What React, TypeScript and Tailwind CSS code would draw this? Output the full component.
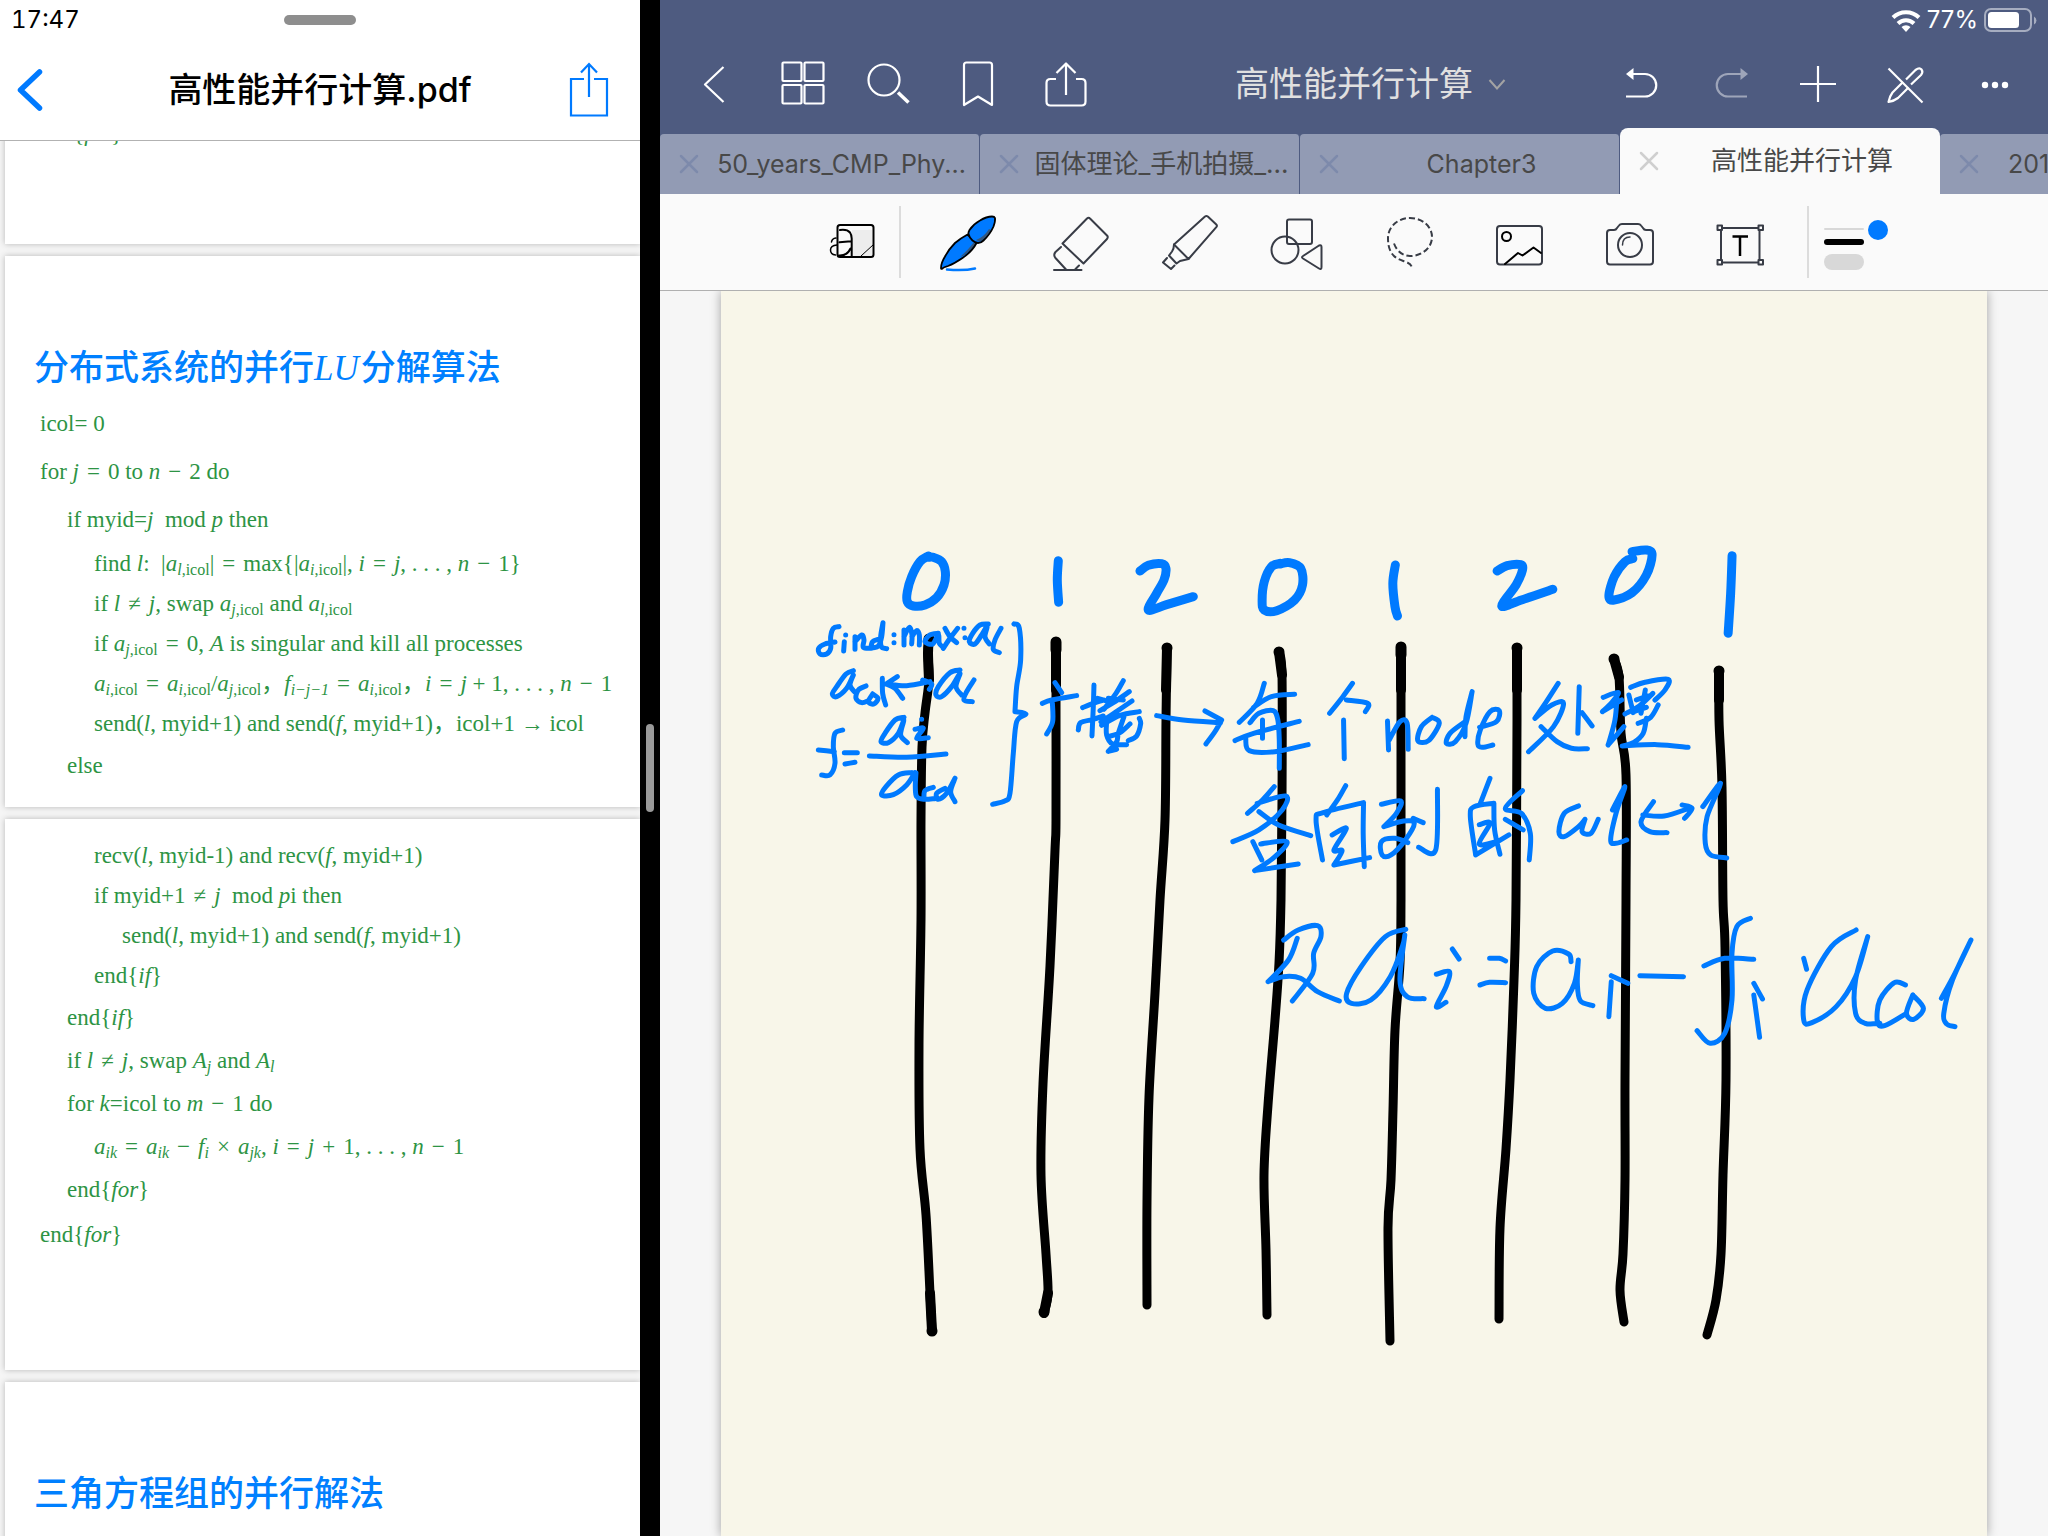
import type { ReactNode } from "react";

const SANS = "font-['Inter','Noto_Sans_CJK_SC',sans-serif]";

/* ---------- Left: document viewer ---------- */

function V({ children, sub }: { children: ReactNode; sub?: ReactNode }) {
  return (
    <>
      <i>{children}</i>
      {sub !== undefined && <sub className="text-base">{sub}</sub>}
    </>
  );
}

function Op({ children }: { children: ReactNode }) {
  return <span className="mx-2">{children}</span>;
}

function PdfPage({ children, className = "" }: { children?: ReactNode; className?: string }) {
  return (
    <section className={`h-[551px] shrink-0 bg-white shadow-[0_0_6px_rgba(0,0,0,0.25)] ${className}`}>
      {children}
    </section>
  );
}

const LEVEL = ["pl-[35px]", "pl-[62px]", "pl-[89px]", "pl-[117px]"];
const LEADING = { wide: "leading-[48px]", mid: "leading-[43px]", tight: "leading-[40px]" };

function Line({
  level,
  gap = "tight",
  children,
}: {
  level: number;
  gap?: keyof typeof LEADING;
  children: ReactNode;
}) {
  return <p className={`whitespace-nowrap ${LEVEL[level]} ${LEADING[gap]}`}>{children}</p>;
}

function PageTitle({ children }: { children: ReactNode }) {
  return (
    <h2 className="whitespace-nowrap pl-[29px] font-['Liberation_Serif','Noto_Sans_CJK_SC',serif] text-[35px] font-medium leading-[62px] text-[#0080ff]">
      {children}
    </h2>
  );
}

function DocumentPane() {
  return (
    <div className="flex w-[640px] shrink-0 flex-col bg-[#f5f5f5]">
      <header className="z-10 flex h-[141px] shrink-0 flex-col border-b border-[#b2b2b2] bg-white">
        <div className="grid h-10 grid-cols-3 items-center px-[11px]">
          <span className={`${SANS} text-2xl tabular-nums`}>17:47</span>
          <span className="h-[10px] w-[72px] justify-self-center rounded-full bg-[#8e8e8e]" />
        </div>
        <div className="grid h-[100px] grid-cols-[1fr_auto_1fr] items-center pl-3 pr-6">
          <button type="button" aria-label="返回" className="justify-self-start">
            <svg width="36" height="48" viewBox="12 66 36 48" fill="none" stroke="#007aff" strokeWidth="5.5" strokeLinecap="round" strokeLinejoin="round">
              <path d="M39.500 72 20.500 90l19 18" />
            </svg>
          </button>
          <h1 className={`${SANS} pl-3 text-[34px] font-medium leading-[48px]`}>高性能并行计算.pdf</h1>
          <button type="button" aria-label="共享" className="justify-self-end">
            <svg width="54" height="60" viewBox="562 60 54 60" fill="none" stroke="#007aff" strokeWidth="2.2">
              <path d="M584 79h-13v36.500h36V79h-13M589 64.500V97M581 72.500l8-8.500 8 8.500" />
            </svg>
          </button>
        </div>
      </header>

      <main className="min-h-0 flex-1 overflow-hidden">
        <div className="-mt-[448px] ml-[5px] flex flex-col gap-3 font-['Liberation_Serif','Noto_Sans_CJK_SC',serif] text-[23px] text-[#2d9444]">
          <PdfPage className="pt-[421px]">
            <Line level={0}>
              end{"{"}
              <i>for</i>
              {"}"}
            </Line>
          </PdfPage>

          <PdfPage className="pt-[82px]">
            <PageTitle>
              分布式系统的并行<i className="mr-0.5">LU</i>分解算法
            </PageTitle>
            <Line level={0} gap="wide">icol= 0</Line>
            <Line level={0} gap="wide">
              for <V>j</V><Op>=</Op>0 to <V>n</V><Op>−</Op>2 do
            </Line>
            <Line level={1} gap="wide">
              if myid=<V>j</V>&nbsp; mod <V>p</V> then
            </Line>
            <Line level={2}>
              find <V>l</V>:&nbsp; |<V sub={<><i>l</i>,icol</>}>a</V>|<Op>=</Op>max{"{"}|<V sub={<><i>i</i>,icol</>}>a</V>|, <V>i</V>
              <Op>=</Op><V>j</V>, . . . , <V>n</V><Op>−</Op>1{"}"}
            </Line>
            <Line level={2}>
              if <V>l</V><Op>≠</Op><V>j</V>, swap <V sub={<><i>j</i>,icol</>}>a</V> and <V sub={<><i>l</i>,icol</>}>a</V>
            </Line>
            <Line level={2}>
              if <V sub={<><i>j</i>,icol</>}>a</V><Op>=</Op>0, <V>A</V> is singular and kill all processes
            </Line>
            <Line level={2}>
              <V sub={<><i>i</i>,icol</>}>a</V><Op>=</Op><V sub={<><i>i</i>,icol</>}>a</V>/<V sub={<><i>j</i>,icol</>}>a</V>，
              <V sub={<i>i−j−1</i>}>f</V><Op>=</Op><V sub={<><i>i</i>,icol</>}>a</V>，<V>i</V><Op>=</Op><V>j</V> + 1, . . . , <V>n</V><Op>−</Op>1
            </Line>
            <Line level={2}>
              send(<V>l</V>, myid+1) and send(<V>f</V>, myid+1)，icol+1 → icol
            </Line>
            <Line level={1} gap="mid">else</Line>
          </PdfPage>

          <PdfPage className="pt-[17px]">
            <Line level={2}>
              recv(<V>l</V>, myid-1) and recv(<V>f</V>, myid+1)
            </Line>
            <Line level={2}>
              if myid+1<Op>≠</Op><V>j</V>&nbsp; mod <V>p</V>i then
            </Line>
            <Line level={3}>
              send(<V>l</V>, myid+1) and send(<V>f</V>, myid+1)
            </Line>
            <Line level={2}>
              end{"{"}<V>if</V>{"}"}
            </Line>
            <Line level={1} gap="mid">
              end{"{"}<V>if</V>{"}"}
            </Line>
            <Line level={1} gap="mid">
              if <V>l</V><Op>≠</Op><V>j</V>, swap <V sub={<i>j</i>}>A</V> and <V sub={<i>l</i>}>A</V>
            </Line>
            <Line level={1} gap="mid">
              for <V>k</V>=icol to <V>m</V><Op>−</Op>1 do
            </Line>
            <Line level={2} gap="mid">
              <V sub={<i>ik</i>}>a</V><Op>=</Op><V sub={<i>ik</i>}>a</V><Op>−</Op><V sub={<i>i</i>}>f</V><Op>×</Op><V sub={<i>jk</i>}>a</V>,{" "}
              <V>i</V><Op>=</Op><V>j</V><Op>+</Op>1, . . . , <V>n</V><Op>−</Op>1
            </Line>
            <Line level={1} gap="mid">
              end{"{"}<V>for</V>{"}"}
            </Line>
            <Line level={0} gap="wide">
              end{"{"}<V>for</V>{"}"}
            </Line>
          </PdfPage>

          <PdfPage className="pt-[82px]">
            <PageTitle>三角方程组的并行解法</PageTitle>
          </PdfPage>
        </div>
      </main>
    </div>
  );
}

/* ---------- Right: note editor ---------- */

function NavButton({
  label,
  x,
  width = 2.2,
  children,
}: {
  label: string;
  x: number;
  width?: number;
  children: ReactNode;
}) {
  return (
    <button type="button" aria-label={label} className="flex h-[88px] w-[88px] items-center justify-center">
      <svg width="48" height="56" viewBox={`${x - 24} 56 48 56`} fill="none" stroke="white" strokeWidth={width} strokeLinejoin="round">
        {children}
      </svg>
    </button>
  );
}

function StatusBar() {
  return (
    <div className="flex h-10 items-center justify-end gap-1.5 pr-[10px] text-white">
      <svg width="30" height="28" viewBox="0 0 30 28" fill="none" stroke="white" strokeWidth="4" aria-label="Wi-Fi">
        <path d="M2 11.500a18.500 18.500 0 0 1 26 0" />
        <path d="M7 17.500a11.500 11.500 0 0 1 16 0" />
        <path d="M15 26l-4.500-5a6.500 6.500 0 0 1 9 0z" fill="white" stroke="none" />
      </svg>
      <span className={`${SANS} text-2xl leading-10`}>77%</span>
      <svg width="54" height="28" viewBox="0 0 54 28" aria-label="电量">
        <rect x="1" y="3" width="46" height="22" rx="6" fill="none" stroke="#a6adc0" strokeWidth="2" />
        <rect x="4" y="6" width="31" height="16" rx="3.500" fill="white" />
        <path d="M50 10.500a4.500 4.500 0 0 1 0 8z" fill="#a6adc0" />
      </svg>
    </div>
  );
}

function NavBar() {
  return (
    <nav className="flex h-[88px] items-center px-[10px]">
      <NavButton label="返回" x={714}>
        <path d="M723.500 67 705 84.500l18.500 17.500" />
      </NavButton>
      <NavButton label="缩略图" x={802}>
        <rect x="782.500" y="62.500" width="19" height="18.500" rx="1" />
        <rect x="804.500" y="62.500" width="19" height="18.500" rx="1" />
        <rect x="782.500" y="85" width="19" height="18.500" rx="1" />
        <rect x="804.500" y="85" width="19" height="18.500" rx="1" />
      </NavButton>
      <NavButton label="搜索" x={890}>
        <circle cx="884" cy="80" r="15.500" />
        <path d="M898 92.500l10.500 10" strokeWidth="3.500" />
      </NavButton>
      <NavButton label="书签" x={978}>
        <path d="M964 105V65q0-2.500 2.500-2.500h23q2.500 0 2.500 2.500v40l-14-8.500z" />
      </NavButton>
      <NavButton label="共享" x={1066}>
        <path d="M1056 79h-5.500q-4 0-4 4v18.500q0 4 4 4h31q4 0 4-4V83q0-4-4-4h-5.500M1066 63.500V95M1056.500 73l9.500-9.500 9.500 9.500" />
      </NavButton>

      <div className="flex flex-1 justify-center">
        <button type="button" className="flex items-center gap-3 pl-9">
          <span className={`${SANS} text-[34px] leading-[48px] text-[#e0e0e0]`}>高性能并行计算</span>
          <svg width="24" height="16" viewBox="0 0 24 16" fill="none" stroke="#a3a3a3" strokeWidth="2">
            <path d="M4.500 4 12 12.500 19.500 4" />
          </svg>
        </button>
      </div>

      <NavButton label="撤销" x={1642}>
        <path d="M1633 74h12a11 11 0 0 1 0 22.500h-19" />
        <path d="M1626 74l7.500-6v12z" fill="white" stroke="none" />
      </NavButton>
      <NavButton label="重做" x={1730}>
        <g opacity="0.45">
          <path d="M1741 74h-13a11 11 0 0 0 0 22.500h19" />
          <path d="M1748 74l-7.500-6v12z" fill="white" stroke="none" />
        </g>
      </NavButton>
      <NavButton label="添加" x={1818}>
        <path d="M1800 84h36M1818 66v36" />
      </NavButton>
      <NavButton label="只读模式" x={1906}>
        <path d="M1888.500 68.500l34 34" />
        <path d="M1906 79.500l9.500-9.500q4-3 6-.5 2 2.500-.5 5.500l-10 9.500M1903 82l-10.500 10.500q-3 4-4 9.500 5.500-1 9.500-4l10.500-10.500" />
      </NavButton>
      <NavButton label="更多" x={1994}>
        <g fill="white" stroke="none">
          <circle cx="1985" cy="85" r="3.200" />
          <circle cx="1995" cy="85" r="3.200" />
          <circle cx="2005" cy="85" r="3.200" />
        </g>
      </NavButton>
    </nav>
  );
}

function Tab({
  title,
  active = false,
  latin = false,
  clipped = false,
}: {
  title: string;
  active?: boolean;
  latin?: boolean;
  clipped?: boolean;
}) {
  return (
    <div
      className={`flex w-80 shrink-0 items-center ${
        active
          ? "h-[66px] rounded-t-lg bg-[#fafafa]"
          : "h-[60px] rounded-t border-r border-[#4e5b80] bg-[#929bb4]"
      }`}
    >
      <button type="button" aria-label="关闭标签页" className="flex w-11 shrink-0 justify-end pr-[5px]">
        <svg width="20" height="20" viewBox="0 0 20 20" strokeWidth="2.500" strokeLinecap="round" className={active ? "stroke-[#cfcfcf]" : "stroke-[#7d8aab]"}>
          <path d="M2 2l16 16M18 2 2 18" />
        </svg>
      </button>
      <button
        type="button"
        className={`flex-1 truncate ${SANS} ${latin ? "text-[25px]" : "text-[26px]"} leading-10 text-[#484848] ${clipped ? "pl-6 text-left" : "text-center"}`}
      >
        {title}
      </button>
    </div>
  );
}

function Tool({ label, x, size = 110, children }: { label: string; x: number; size?: 90 | 110; children: ReactNode }) {
  return (
    <button type="button" aria-label={label} className={`flex h-24 items-center justify-center ${size === 90 ? "w-[90px]" : "w-[110px]"}`}>
      <svg
        width="72"
        height="64"
        viewBox={`${x - 36} 210 72 64`}
        fill="none"
        stroke="#383c46"
        strokeWidth="2"
        strokeLinejoin="round"
        strokeLinecap="round"
      >
        {children}
      </svg>
    </button>
  );
}

const PEN_BODY =
  "M941 268q0-5 4-11.500 4-7.500 10-13.500 6-5 12.500-8.500l9 8.500q-4 8-14 15-8 5.500-14.500 8-5 1.500-5.500 2.500-1.500 1-1.500-.5z";
const PEN_CAP =
  "M968.500 234q-.5-1.500 1-4 4-6 10.500-9.500 6.500-4 12-4 2.500 0 3 1.500.5 3-1.500 8.500-3.500 8-10 14-2.500 2.500-5.500 2.500-3-.5-5.500-2.500-3-2.500-4-6.500z";

function Toolbar() {
  return (
    <div className="flex h-[97px] items-start justify-center border-b border-[#b0b0b0] bg-[#fafafa]">
      <Tool label="缩放窗口" x={854} size={90}>
        <rect x="852" y="230" width="20" height="27" fill="#ededed" stroke="none" />
        <path d="M836 238q-4 .5-4.500 4M837 245q-6.500.5-6.500 5t5 5" stroke="black" strokeWidth="1.500" />
        <path d="M840 230q7-1 10 2.500 1.700 2.500 1.700 6v17.500M839.500 242.300l11.500-1M839 255.500q8 .5 11.500-7" stroke="black" strokeWidth="2" />
        <path d="M861 256l12-11" stroke="black" strokeWidth="1" />
        <rect x="837.500" y="225" width="36" height="32" rx="2.500" stroke="black" strokeWidth="2" />
      </Tool>
      <span className="mr-[13px] mt-3 h-[72px] w-0.5 bg-[#dcdcdc]" />
      <Tool label="钢笔" x={969}>
        <path d={PEN_BODY} fill="#007aff" stroke="none" />
        <path d="M960 257q9-8 14-15l2 1.500q-5 7-13 12.500z" fill="#35587f" stroke="none" />
        <path d={PEN_BODY} stroke="black" strokeWidth="1.800" />
        <path d={PEN_CAP} fill="#007aff" stroke="none" />
        <path d="M976 240q8-3 13-11l2 1q-2 5-7 9.500-3 2-5 2z" fill="#35587f" stroke="none" />
        <path d={PEN_CAP} stroke="black" strokeWidth="1.800" />
        <path d="M947 269.500q17 1.500 28-1" stroke="#007aff" strokeWidth="2.500" />
      </Tool>
      <Tool label="橡皮擦" x={1079}>
        <path d="M1062.500 243.500l24.500-25q1.600-1.500 3 0l17 17q1.500 1.500 0 3.500l-23.500 24.500z" />
        <path d="M1061 247l-5.500 5q-2.500 3 0 6l10.500 11.500M1079 265.500l-3.500 3.500M1054 270h27.500" />
      </Tool>
      <Tool label="荧光笔" x={1189}>
        <path d="M1174 244.500l31-28q1.400-1 2.800 0l8.500 8q1.200 1.200 0 2.700L1188.500 259z" />
        <path d="M1174 244.500q0 4-2 7l-3 4 7.500 8 3.500-2.500 8.500-2M1167 258l-4 4.500 8 6.500 3.500-3.500" />
      </Tool>
      <Tool label="形状" x={1299}>
        <rect x="1287" y="219.500" width="25" height="24.500" rx="2" />
        <circle cx="1285" cy="250" r="13.500" />
        <path d="M1303 256l16-10.500q2.500-1 2.500 1.500v20q0 3-2.500 1.500l-16-10q-2-1.300 0-2.500z" />
      </Tool>
      <Tool label="套索" x={1409}>
        <path
          d="M1394 243.500c3 8 9 12.500 16 12.500 12.500 0 22-8.500 22-19s-9.500-19-22-19-22 9-22 20c0 9 2 14 6 18 6 6 18 5 18 12.500"
          strokeDasharray="6 3"
          strokeLinecap="butt"
        />
      </Tool>
      <Tool label="图片" x={1519}>
        <rect x="1497" y="226" width="45" height="38.500" rx="3" />
        <circle cx="1506.500" cy="236.500" r="4.500" stroke="black" />
        <path d="M1505 264l13-11 4.500 2.500 11-8 7.500 5.500" stroke="black" />
      </Tool>
      <Tool label="相机" x={1629}>
        <path d="M1607 233q0-3 3-3h4q2 0 3-2l2-2.500q1-1.500 3-1.500h16q2 0 3 1.500l2 2.500q1 2 3 2h4q3 0 3 3v28.500q0 3-3 3h-40q-3 0-3-3z" />
        <circle cx="1630" cy="245" r="12" />
        <path d="M1622.500 245q0-8 7.500-8" strokeWidth="1.500" />
      </Tool>
      <Tool label="文本" x={1739}>
        <rect x="1721" y="228" width="38.500" height="34.500" strokeLinejoin="miter" />
        <g fill="#fafafa">
          <rect x="1717.500" y="225.500" width="4.500" height="4.500" />
          <rect x="1758.500" y="225.500" width="4.500" height="4.500" />
          <rect x="1717.500" y="260" width="4.500" height="4.500" />
          <rect x="1758.500" y="260" width="4.500" height="4.500" />
        </g>
        <path d="M1732.500 236.500h15.500M1740 236.500v19.500" stroke="black" strokeWidth="2.500" strokeLinecap="butt" />
      </Tool>
      <span className="ml-[13px] mt-3 h-[72px] w-0.5 bg-[#dcdcdc]" />
      <Tool label="笔画粗细与颜色" x={1854} size={90}>
        <path d="M1825 229h38" stroke="#d8d8d8" />
        <path d="M1827 242h34" stroke="black" strokeWidth="6" />
        <path d="M1832 262h24" stroke="#d8d8d8" strokeWidth="16" />
        <circle cx="1878" cy="230" r="10" fill="#007aff" stroke="none" />
      </Tool>
    </div>
  );
}

/* ---------- Ink layer ---------- */

/* Smooth curve through a list of "x,y" points (Catmull-Rom). */
function curve(stroke: string): string {
  const p = stroke.trim().split(/\s+/).map((pair) => pair.split(",").map(Number));
  if (p.length === 1) return `M${p[0]}h0.01`;
  let d = `M${p[0]}`;
  for (let i = 0; i < p.length - 1; i++) {
    const a = p[i - 1] ?? p[i];
    const b = p[i];
    const c = p[i + 1];
    const e = p[i + 2] ?? c;
    d += `C${b[0] + (c[0] - a[0]) / 6},${b[1] + (c[1] - a[1]) / 6} ${c[0] - (e[0] - b[0]) / 6},${c[1] - (e[1] - b[1]) / 6} ${c}`;
  }
  return d;
}

function Ink({ strokes, width, color = "#007aff" }: { strokes: string[]; width: number; color?: string }) {
  return (
    <path
      d={strokes.map(curve).join("")}
      fill="none"
      stroke={color}
      strokeWidth={width}
      strokeLinecap="round"
      strokeLinejoin="round"
      vectorEffect="non-scaling-stroke"
    />
  );
}

const COLUMNS = [
  "929,639 928,653 929,680 925,713 922,747 921,820 921,920 919,1045 920,1149 926,1215 930,1293 932,1331",
  "1056,642 1056,707 1056,820 1055,850 1050,966 1043,1084 1041,1175 1046,1254 1048,1293 1044,1313",
  "1167,648 1166,720 1165,820 1160,900 1155,993 1149,1097 1147,1201 1147,1305",
  "1279,652 1282,675 1282,800 1281,900 1279,963 1275,1020 1268,1105 1264,1175 1266,1250 1267,1315",
  "1401,647 1401,780 1401,900 1400,963 1395,1030 1393,1110 1391,1180 1388,1228 1390,1341",
  "1517,648 1517,720 1516,900 1514,980 1510,1080 1506,1149 1500,1228 1499,1319",
  "1614,659 1619,677 1621,733 1626,775 1626,900 1625,1080 1625,1180 1623,1254 1620,1290 1624,1322",
  "1719,671 1719,720 1722,787 1723,900 1725,947 1726,1080 1723,1175 1721,1254 1716,1300 1707,1335",
];

/* Pen pressure is highest where each column starts and ends. */
const COLUMN_TOPS = [
  "929,639 928,653 929,680",
  "1056,642 1056,690",
  "1167,648 1166,690",
  "1279,652 1282,675",
  "1401,647 1401,690",
  "1517,648 1517,690",
  "1614,659 1619,677",
  "1719,671 1719,700",
  "930,1293 932,1331",
  "1048,1293 1044,1313",
];

const COLUMN_ENDS = [
  "929,639",
  "1056,642 1056,650",
  "1167,648",
  "1279,652",
  "1401,647 1401,655",
  "1517,648",
  "1614,659",
  "1719,671",
  "932,1331",
  "1044,1312",
];

const DIGITS_LEFT = [
  "385,108 360,125 335,170 322,215 322,245 340,258 375,255 410,233 432,195 436,155 425,125 400,112 385,112",
  "775,122 772,180 776,247",
  "1020,153 1045,136 1085,131 1098,145 1092,180 1070,220 1045,270 1100,254 1180,230",
];

const NOTES_LEFT = [
  "117,320 100,325 92,350 92,385 80,402 60,402 56,385 75,372 105,366",
  "137,345",
  "133,365 131,393",
  "165,350 165,388",
  "165,365 185,345 192,360 190,382 213,385",
  "235,358 218,365 215,382 235,378 245,350 249,308",
  "249,308 242,350 244,380 260,386",
  "282,344",
  "282,368",
  "312,330 312,375",
  "312,350 328,322 336,345 335,372",
  "336,350 350,332 358,345 358,375",
  "415,340 390,345 375,365 398,372 415,345 418,370 430,382",
  "435,325 450,350 470,368",
  "473,325 450,355 430,385",
  "492,325",
  "495,353",
  "565,312 540,315 518,340 508,365 525,372 545,345 562,318 555,350 568,372",
  "603,325 585,360 580,388 598,398",
  "642,312 658,325 662,420 650,500 645,575",
  "645,575 678,582 650,605 640,700 630,820 615,843 578,853",
  "160,452 138,462 110,500 97,522 110,530 140,505 160,465 150,495 163,515",
  "198,498 175,510 168,535 185,548 205,542",
  "218,522 205,545 222,552 234,535 218,522",
  "247,475 248,520 257,555",
  "262,492 320,497 390,485",
  "292,470 258,492",
  "258,492 285,505 308,535",
  "368,480 395,492 388,508",
  "480,450 450,458 415,500 408,525 425,530 455,500 480,460 468,500 485,525",
  "522,480 500,515 492,540 517,545",
  "765,488 785,518",
  "727,550 755,540 830,527",
  "757,545 758,605 740,642",
  "882,495 880,560 876,648",
  "848,563 880,550 912,540",
  "835,630 842,608 880,598 910,588",
  "970,482 948,520 912,568",
  "893,535 925,545",
  "988,515 940,548 900,572",
  "925,535 970,540",
  "996,543 945,578 903,606",
  "905,616 960,586 1018,575",
  "920,605 920,645 938,672 980,674",
  "1018,595 1022,612 1010,648 985,662",
  "972,590 955,640 950,665 925,694",
  "925,650 960,638 990,612",
  "925,694 950,688",
  "1070,587 1150,600 1262,608",
  "1215,573 1265,600",
  "1265,600 1245,635 1218,672",
  "128,630 105,640 100,680 105,730 90,765 65,765",
  "55,690 103,695",
  "133,698 172,698",
  "135,732 165,727",
  "208,708 320,712 438,702",
  "312,592 285,600 255,640 243,665 265,668 295,640 312,600 302,645 322,668",
  "365,598",
  "345,628 370,625 350,655 385,653",
  "335,758 295,765 258,800 245,825 280,824 320,795 345,758",
  "348,758 346,800 350,830 372,838 405,836",
  "400,802 375,812 372,835",
  "435,805 410,820 415,838 440,820 465,775",
  "465,775 452,815 465,845",
];

const DIGITS_RIGHT = [
  "225,130 200,140 180,185 174,240 180,270 215,272 265,240 287,195 282,145 250,128 225,132",
  "547,135 540,190 546,260 553,288",
  "832,153 860,137 898,134 903,150 885,195 845,258 900,240 988,208",
  "1210,95 1250,90 1266,105 1250,165 1210,218 1160,240 1145,228 1160,170 1190,125 1212,116",
  "1490,107 1486,220 1479,340",
];

const NOTES_RIGHT = [
  "180,490 160,550 110,607",
  "150,562 200,530 265,523",
  "140,608 165,580 205,572 218,600 222,660 222,745",
  "175,600 175,655",
  "98,662 150,640 278,604",
  "128,655 138,692 210,695 303,674",
  "427,490 400,530 363,580",
  "410,540 470,550 463,575",
  "402,600 404,716",
  "525,603 528,690",
  "530,660 560,605 580,610 583,688",
  "650,592 620,620 610,662 640,662 670,610 650,592",
  "738,608 700,640 690,670 715,665 745,610 762,515",
  "762,515 745,590 742,650",
  "783,622 830,605 838,572 812,575 785,630 778,672 790,682 820,675",
  "1003,490 970,545 938,595",
  "938,595 985,555 1018,550 990,620 920,695",
  "955,620 1000,665 1040,685 1085,686",
  "1062,500 1058,640",
  "1070,578 1098,618",
  "1129,532 1171,517 1153,548 1127,575",
  "1127,575 1181,540",
  "1168,525 1162,600 1143,675",
  "1143,675 1187,620",
  "1206,502 1246,487 1311,478 1302,510 1274,540",
  "1201,525 1213,578",
  "1190,582 1230,558 1268,520",
  "1222,540 1255,528",
  "1247,510 1235,580",
  "1215,575 1250,562",
  "1283,555 1262,592 1227,610",
  "1250,595 1241,640 1215,667 1185,678",
  "1182,678 1280,674 1367,682",
  "208,800 175,840 133,880",
  "160,850 240,828 230,870 165,930 92,965",
  "165,875 220,915 310,947",
  "148,965 173,1020",
  "170,972 243,965 210,1010 153,1052",
  "153,1052 275,1032",
  "408,797 385,840 355,885",
  "343,1020 325,900 345,878 458,848",
  "458,848 457,940 460,1040",
  "370,945 410,925 375,990 398,992 375,1035",
  "375,1035 475,1013",
  "508,853 562,843 550,880 515,920",
  "515,920 570,903 600,910 575,960 535,1005 510,1005 508,965 545,955 582,968",
  "597,895 625,908",
  "665,808 660,990 612,982",
  "812,775 785,850",
  "772,1005 757,890 768,860 823,850",
  "823,850 825,930 840,1003",
  "782,914 812,910 782,972 830,965",
  "772,1005 865,945",
  "903,812 855,865 900,880 925,940 922,1020",
  "855,898 905,930",
  "1060,858 1020,880 1005,935 1020,950 1060,920 1078,898",
  "1078,898 1070,935 1095,940 1115,898",
  "1155,870 1190,800 1165,880 1150,960 1165,970 1195,960",
  "1270,845 1235,905 1260,935 1308,938",
  "1240,885 1300,888 1370,865",
  "1350,855 1378,865 1357,895",
  "1408,860 1458,790 1420,890 1415,970 1430,1005 1475,1014",
];

const FORMULA = [
  "90,180 120,150 160,137 167,170 152,220 150,280 108,363",
  "118,175 100,240 58,305",
  "58,305 90,290 125,295 160,335 205,363",
  "342,148 300,170 250,260 220,340 230,370 270,360 310,290 335,200 340,165",
  "340,165 330,300 345,350 380,356",
  "438,207 452,237",
  "405,283 432,275 425,320 405,380 425,367",
  "515,235 535,235 548,243",
  "495,315 515,307 548,308",
  "683,245 678,222 645,213 612,260 606,340 630,385 665,370 690,310 698,240",
  "698,240 696,310 702,362 728,377",
  "766,287 800,310",
  "766,305 761,410",
  "825,287 915,290",
  "1053,115 1025,140 1015,220 1015,360 1000,460 970,490 943,452",
  "957,258 1000,235 1060,238",
  "1060,310 1078,357",
  "1060,345 1072,472",
  "1163,235 1169,268",
  "1271,150 1220,200 1170,330 1163,420 1180,428 1230,380 1270,290 1295,170",
  "1295,170 1270,300 1270,400 1290,430 1320,430",
  "1373,315 1350,308 1320,360 1315,425 1330,437 1375,400",
  "1388,345 1375,400 1390,418 1410,385 1388,345",
  "1447,355 1475,280 1508,180",
  "1508,180 1470,300 1452,400 1458,432 1475,440",
];

function Paper() {
  return (
    <main className="min-h-0 flex-1 overflow-hidden bg-[#f6f6f6] px-[61px]">
      <div className="h-full bg-[#f8f6e9] shadow-[0_0_10px_rgba(0,0,0,0.35)]">
        <svg
          className="h-full w-full"
          viewBox="721 291 1266 1245"
          preserveAspectRatio="xMidYMin meet"
          role="img"
          aria-label="手写笔记：0 1 2 0 1 2 0 1；find: max: al；acol ↔ al；f = ai / acol；广播 → 每个 node 处理各自列的 col ↔ l，及 ai = ai − fi · acol"
        >
          <Ink strokes={COLUMNS} width={9} color="black" />
          <Ink strokes={COLUMN_TOPS} width={10} color="black" />
          <Ink strokes={COLUMN_ENDS} width={11} color="black" />
          <g transform="translate(800 520) scale(0.3333)">
            <Ink strokes={DIGITS_LEFT} width={9} />
            <Ink strokes={NOTES_LEFT} width={5} />
          </g>
          <g transform="translate(1200 520) scale(0.3571 0.3333)">
            <Ink strokes={DIGITS_RIGHT} width={9} />
            <Ink strokes={NOTES_RIGHT} width={5} />
          </g>
          <g transform="translate(1240 880) scale(0.4847 0.3333)">
            <Ink strokes={FORMULA} width={5} />
          </g>
        </svg>
      </div>
    </main>
  );
}

function NotesPane() {
  return (
    <div className="flex min-w-0 flex-1 flex-col bg-[#4e5b80]">
      <StatusBar />
      <NavBar />
      <div className="flex h-[66px] shrink-0 items-end overflow-hidden">
        <Tab title="50_years_CMP_Phy..." latin />
        <Tab title="固体理论_手机拍摄_..." />
        <Tab title="Chapter3" latin />
        <Tab title="高性能并行计算" active />
        <Tab title="201" latin clipped />
      </div>
      <Toolbar />
      <Paper />
    </div>
  );
}

export default function App() {
  return (
    <div className="flex h-screen overflow-hidden bg-black">
      <DocumentPane />
      <div className="flex w-5 shrink-0 items-center justify-center bg-black">
        <span className="h-[88px] w-2 rounded-full bg-[#999999]" />
      </div>
      <NotesPane />
    </div>
  );
}
